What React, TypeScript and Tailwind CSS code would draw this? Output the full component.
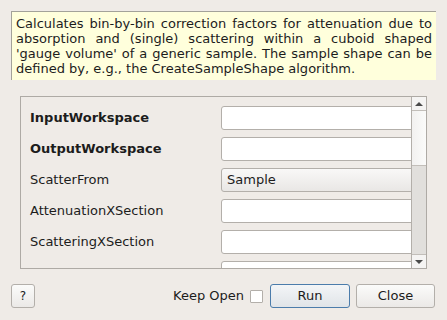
import React from 'react';

const rows = [
  { label: 'InputWorkspace', bold: true, kind: 'text' },
  { label: 'OutputWorkspace', bold: true, kind: 'text' },
  { label: 'ScatterFrom', bold: false, kind: 'combo', value: 'Sample' },
  { label: 'AttenuationXSection', bold: false, kind: 'text' },
  { label: 'ScatteringXSection', bold: false, kind: 'text' },
  { label: '', bold: false, kind: 'text' },
];

const App: React.FC = () => {
  return (
    <div className="w-[447px] h-[320px] bg-[#efebe7] flex flex-col font-['DejaVu_Sans',sans-serif] text-[13px] text-[#1c1c1c] overflow-hidden">
      {/* algorithm description */}
      <div className="mx-[11px] mt-[11px] h-[69px] bg-[#ffffdc] border-l border-t border-[#a3a29a] px-[4px] pt-[4px] leading-[15px] text-justify">
        Calculates bin-by-bin correction factors for attenuation due to absorption and (single) scattering within a cuboid shaped 'gauge volume' of a generic sample. The sample shape can be defined by, e.g., the CreateSampleShape algorithm.
      </div>

      {/* property list */}
      <div className="mx-[20px] mt-[16px] h-[173px] border border-[#aeaaa5] flex overflow-hidden">
        <div className="flex-1 min-w-0 pt-[9px] pl-[9px] flex flex-col gap-[7px] overflow-hidden">
          {rows.map((r, i) => (
            <div key={i} className="flex items-center h-[24px] shrink-0 -mr-[4px]">
              <div className={`w-[191px] shrink-0 ${r.bold ? 'font-bold' : ''}`}>{r.label}</div>
              {r.kind === 'combo' ? (
                <div className="flex-1 h-[24px] rounded-[3px] border border-[#b3afaa] bg-gradient-to-b from-[#f9f8f7] to-[#e9e7e5] flex items-center pl-[5px]">
                  {r.value}
                </div>
              ) : (
                <div className="flex-1 h-[24px] rounded-[3px] border border-[#b3afaa] bg-white" />
              )}
            </div>
          ))}
        </div>
        <div className="w-[15px] shrink-0 border-l border-[#b3afaa] flex flex-col bg-[#e1dfdc]">
          <div className="h-[14px] shrink-0 border-b border-[#c2beb9] bg-[#f5f4f3] flex items-center justify-center">
            <div className="w-0 h-0 border-x-[4px] border-x-transparent border-b-[4px] border-b-[#4a4a4a]" />
          </div>
          <div className="h-[55px] shrink-0 border-b border-[#c2beb9] bg-gradient-to-r from-[#f2f1f0] to-[#fbfbfa]" />
          <div className="flex-1" />
          <div className="h-[14px] shrink-0 border-t border-[#c2beb9] bg-[#f5f4f3] flex items-center justify-center">
            <div className="w-0 h-0 border-x-[4px] border-x-transparent border-t-[4px] border-t-[#4a4a4a]" />
          </div>
        </div>
      </div>

      {/* buttons */}
      <div className="mt-[15px] ml-[11px] mr-[12px] h-[24px] flex items-center">
        <button className="w-[24px] h-[24px] rounded-[3px] border border-[#b3afaa] bg-gradient-to-b from-[#fbfbfa] to-[#ebe9e7] text-[12px]">
          ?
        </button>
        <div className="flex-1" />
        <span>Keep Open</span>
        <div className="ml-[6px] w-[13px] h-[13px] border border-[#b3afaa] bg-white rounded-[1px]" />
        <button className="ml-[7px] w-[80px] h-[24px] rounded-[3px] border border-[#4b7cab] bg-gradient-to-b from-[#f3f5f7] to-[#e0e4e8]">
          Run
        </button>
        <button className="ml-[6px] w-[79px] h-[24px] rounded-[3px] border border-[#b3afaa] bg-gradient-to-b from-[#fbfbfa] to-[#ebe9e7]">
          Close
        </button>
      </div>
    </div>
  );
};

export default App;
